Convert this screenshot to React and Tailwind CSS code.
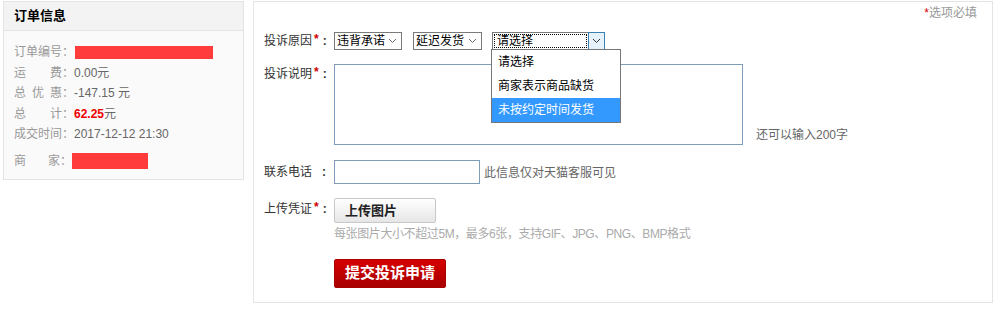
import React from "react";

const FONT = { fontFamily: '"Liberation Sans", "Noto Sans CJK SC", sans-serif' };

function Star() {
  return <span className="text-[#c00] text-[12px] font-bold ml-[2px] leading-[12px] self-start mt-[1px]">*</span>;
}

function Colon() {
  return <span className="font-bold ml-[4px]">:</span>;
}

function Chevron({ color = "#666" }) {
  return (
    <svg width="9" height="6" viewBox="0 0 9 6" className="shrink-0">
      <path d="M1 1 L4.5 4.5 L8 1" fill="none" stroke={color} strokeWidth="1" />
    </svg>
  );
}

function OrderRow({ label, children, className = "" }) {
  return (
    <div className={`flex items-center h-[20.5px] ${className}`}>
      <div className="w-[60px] shrink-0 flex justify-between text-[#999]">{label}</div>
      <div className="text-[#666]">{children}</div>
    </div>
  );
}

function Spread({ chars }) {
  return (
    <>
      {chars.map((c, i) => (
        <span key={i}>{c}</span>
      ))}
    </>
  );
}

export default function App() {
  return (
    <div className="flex items-start w-[1003px] h-[311px] bg-white text-[12px] text-[#333]" style={FONT}>
      {/* order panel */}
      <div className="ml-[3px] mt-[1px] w-[241px] h-[179px] border border-[#e4e4e4] bg-[#fafafa]">
        <div className="h-[29px] bg-[#f3f3f3] border-b border-[#e4e4e4] pl-[10px] flex items-center text-[13px] font-bold text-black">
          订单信息
        </div>
        <div className="pl-[10px] pt-[11px]">
          <OrderRow label={<Spread chars={["订单编号："]} />}>
            <div className="w-[138px] h-[13px] bg-[#ff3b3b] ml-[1px]" />
          </OrderRow>
          <OrderRow label={<Spread chars={["运", "费："]} />}>0.00元</OrderRow>
          <OrderRow label={<Spread chars={["总", "优", "惠："]} />}>-147.15 元</OrderRow>
          <OrderRow label={<Spread chars={["总", "计："]} />}>
            <span className="text-[#e00] font-bold">62.25</span>元
          </OrderRow>
          <OrderRow label={<Spread chars={["成交时间："]} />}>2017-12-12 21:30</OrderRow>
          <div className="flex items-center h-[20px] mt-[6px]">
            <div className="w-[58px] shrink-0 flex justify-between text-[#999]">
              <span>商</span>
              <span>家：</span>
            </div>
            <div className="w-[76px] h-[16px] bg-[#ff3b3b]" />
          </div>
        </div>
      </div>

      {/* complaint form */}
      <div className="ml-[9px] mt-[1px] w-[740px] h-[302px] border border-[#e4e4e4] bg-white pl-[10px]">
        <div className="flex justify-end pr-[15px] h-[20px] items-center text-[#999] pt-[2px]">
          <span className="text-[#c00]">*</span>选项必填
        </div>

        {/* reason */}
        <div className="flex items-center h-[18px] mt-[10px]">
          <div className="w-[70px] shrink-0 flex items-center">
            投诉原因<Star /><Colon />
          </div>
          <div className="h-[18px] w-[68px] border border-[#7a7a7a] flex items-center justify-between pl-[2px] pr-[4px] text-black whitespace-nowrap">
            违背承诺 <Chevron />
          </div>
          <div className="ml-[11px] h-[18px] w-[69px] border border-[#7a7a7a] flex items-center justify-between pl-[2px] pr-[4px] text-black whitespace-nowrap">
            延迟发货 <Chevron />
          </div>
          <div className="relative ml-[10px] h-[18px] w-[113px] border border-[#7a7a7a] flex items-stretch text-black">
            <div className="flex-1 flex items-center m-[1px] border border-dotted border-black pl-[2px]">请选择</div>
            <div className="w-[17px] -my-[1px] -mr-[1px] bg-[#e5f1fb] border border-[#3c7fb1] flex items-center justify-center">
              <Chevron color="#333" />
            </div>
            <div className="absolute left-[-2px] top-[16px] w-[130px] border border-[#767676] bg-white z-10 text-black">
              <div className="h-[24px] flex items-center pl-[6px]">请选择</div>
              <div className="h-[24px] flex items-center pl-[6px]">商家表示商品缺货</div>
              <div className="h-[24px] flex items-center pl-[6px] bg-[#3399ff] text-white">未按约定时间发货</div>
            </div>
          </div>
        </div>

        {/* description */}
        <div className="flex items-start mt-[14px]">
          <div className="w-[70px] shrink-0 flex items-center h-[18px] mt-[1px]">
            投诉说明<Star /><Colon />
          </div>
          <div className="w-[409px] h-[81px] border border-[#7f9db9] bg-white" />
          <div className="self-end ml-[13px] mb-[1px] text-[#666]">还可以输入200字</div>
        </div>

        {/* phone */}
        <div className="flex items-center mt-[15px]">
          <div className="w-[70px] shrink-0 flex">
            <span>联系电话</span>
            <span className="ml-[10px] font-bold">:</span>
          </div>
          <div className="w-[146px] h-[24px] border border-[#7f9db9] bg-white" />
          <div className="ml-[4px] text-[#666] mt-[2px]">此信息仅对天猫客服可见</div>
        </div>

        {/* upload */}
        <div className="flex items-start mt-[14px]">
          <div className="w-[70px] shrink-0 flex items-center h-[18px] mt-[2px]">
            上传凭证<Star /><Colon />
          </div>
          <div className="flex flex-col">
            <div className="w-[102px] h-[25px] border border-[#c8c8c8] rounded-[2px] bg-gradient-to-b from-white to-[#e6e6e6] flex items-center pl-[10px] text-[13px] font-bold text-[#222]">
              上传图片
            </div>
            <div className="mt-[3px] text-[#aaa] leading-[16px] tracking-[-0.4px] whitespace-nowrap">
              每张图片大小不超过5M，最多6张，支持GIF、JPG、PNG、BMP格式
            </div>
            <div className="mt-[17px] w-[112px] h-[29px] rounded-[2px] border border-[#a00] bg-gradient-to-b from-[#d60000] to-[#a80000] flex items-center justify-center text-white font-bold text-[15px]">
              提交投诉申请
            </div>
          </div>
        </div>
      </div>
    </div>
  );
}
